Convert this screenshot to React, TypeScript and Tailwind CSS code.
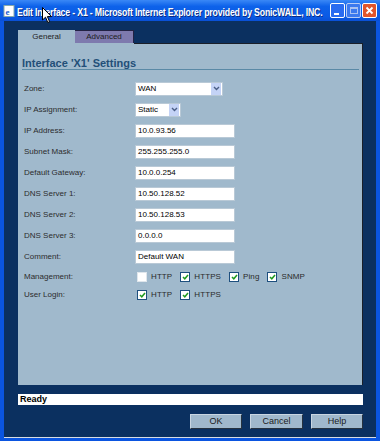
import React from "react";

const font = { fontFamily: '"Liberation Sans", Arial, sans-serif' };

const Field = ({ value, w }: { value: string; w: number }) => (
  <div
    className="flex h-[14px] items-center border border-[#b9c9d6] bg-white pl-[2px] text-[8px] text-black"
    style={{ width: w }}
  >
    {value}
  </div>
);

const Select = ({ value, w }: { value: string; w: number }) => (
  <div
    className="flex h-[14px] items-center border border-[#b9c9d6] bg-white text-[8px] text-black"
    style={{ width: w }}
  >
    <span className="flex-1 pl-[2px]">{value}</span>
    <span className="mr-[1px] flex h-[12px] w-[10px] items-center justify-center bg-[#c4d3f6]">
      <svg width="7" height="5" viewBox="0 0 7 5">
        <path d="M1 1 L3.5 3.5 L6 1" stroke="#4a5e86" strokeWidth="1.4" fill="none" />
      </svg>
    </span>
  </div>
);

const Check = ({ on, label }: { on: boolean; label: string }) => (
  <div className="flex items-center gap-[4px]">
    <span
      className={
        on
          ? "flex h-[10px] w-[10px] items-center justify-center border border-[#1d4f7e] bg-white"
          : "flex h-[10px] w-[10px] items-center justify-center border border-[#dfe6ec] bg-white"
      }
    >
      {on && (
        <svg width="7" height="6" viewBox="0 0 7 6">
          <path d="M1 3 L2.8 4.8 L6 1" stroke="#1f9a1f" strokeWidth="1.5" fill="none" />
        </svg>
      )}
    </span>
    <span className="text-[8px] tracking-[0.1px] text-[#2a2a2a]">{label}</span>
  </div>
);

const Row = ({ label, children }: { label: string; children: React.ReactNode }) => (
  <div className="flex h-[21px] items-center">
    <div className="w-[117px] pl-[6px] text-[8px] text-[#2c2c2c]">{label}</div>
    {children}
  </div>
);

const Btn = ({ label, w }: { label: string; w: number }) => (
  <div
    className="flex h-[15px] items-center justify-center border border-t-[#c9d6e2] border-l-[#c9d6e2] border-r-[#26323f] border-b-[#26323f] bg-[#a0b8cc] text-[9px] text-[#1b1b1b]"
    style={{ width: w }}
  >
    {label}
  </div>
);

export default function App() {
  return (
    <div className="relative flex h-[441px] w-[380px] flex-col overflow-hidden bg-[#0b55e0]" style={font}>
      {/* title bar */}
      <div className="flex h-[21px] items-center bg-[linear-gradient(#3a88f6,#0d62ea_30%,#0a5ae4_80%,#0a50d6)] pl-[3px] pr-[3px]">
        <svg width="12" height="12" viewBox="0 0 12 12" className="mr-[2px] shrink-0">
          <rect x="1" y="0.5" width="10" height="11" fill="#fff" stroke="#8aa" />
          <text x="2.5" y="10" fontSize="9" fontWeight="bold" fill="#1a5fd0" fontFamily="Liberation Serif">e</text>
        </svg>
        <div className="flex-1 overflow-hidden">
          <span className="inline-block origin-left scale-x-[0.875] whitespace-nowrap text-[10px] font-bold tracking-[-0.2px] text-white [text-shadow:1px_1px_0_#0a2a80]">
            Edit Interface - X1 - Microsoft Internet Explorer provided by SonicWALL, INC.
          </span>
        </div>
        <div className="flex shrink-0 gap-[1px]">
          <div className="flex h-[15px] w-[15px] items-end rounded-[2px] border border-white bg-[#2a6cf0] pb-[2px] pl-[3px]">
            <span className="h-[2px] w-[5px] bg-white" />
          </div>
          <div className="flex h-[15px] w-[15px] items-center justify-center rounded-[2px] border border-[#b9cdf5] bg-[#3b79ee]">
            <span className="h-[7px] w-[8px] border border-t-2 border-[#a9c2f2]" />
          </div>
          <div className="flex h-[15px] w-[15px] items-center justify-center rounded-[2px] border border-white bg-[#e0552c]">
            <svg width="9" height="9" viewBox="0 0 9 9">
              <path d="M1.5 1.5 L7.5 7.5 M7.5 1.5 L1.5 7.5" stroke="#fff" strokeWidth="1.8" />
            </svg>
          </div>
        </div>
      </div>

      {/* body */}
      <div className="mx-[4px] mb-[3px] flex flex-1 flex-col border-b border-[#d8dde3] bg-[#0b3060] pl-[14px] pr-[13px] pt-[9px]">
        <div className="flex h-[13px]">
          <div className="flex w-[57px] items-center justify-center bg-[#a0b9cc] text-[8px] text-[#222]">General</div>
          <div className="flex w-[59px] items-center justify-center border-r border-t border-[#222244] bg-[#7e7aae] text-[8px] text-[#1c1c1c]">
            Advanced
          </div>
        </div>
        <div className="h-[342px] border-r border-[#1a1f28] bg-[#a0b9cc]">
          <div className="flex h-[0px]">
            <div className="w-[116px]" />
            <div className="flex-1 border-t border-[#1a1f28]" />
          </div>
          <div className="ml-[4px] mr-[3px] border-b border-[#5a89a6] pt-[14px] text-[11px] font-bold leading-[12px] text-[#234f78]">
            Interface 'X1' Settings
          </div>
          <div className="mt-[8px] flex flex-col">
            <Row label="Zone:">
              <Select value="WAN" w={88} />
            </Row>
            <Row label="IP Assignment:">
              <Select value="Static" w={46} />
            </Row>
            <Row label="IP Address:">
              <Field value="10.0.93.56" w={100} />
            </Row>
            <Row label="Subnet Mask:">
              <Field value="255.255.255.0" w={100} />
            </Row>
            <Row label="Default Gateway:">
              <Field value="10.0.0.254" w={100} />
            </Row>
            <Row label="DNS Server 1:">
              <Field value="10.50.128.52" w={100} />
            </Row>
            <Row label="DNS Server 2:">
              <Field value="10.50.128.53" w={100} />
            </Row>
            <Row label="DNS Server 3:">
              <Field value="0.0.0.0" w={100} />
            </Row>
            <Row label="Comment:">
              <Field value="Default WAN" w={100} />
            </Row>
            <div className="flex h-[19px] items-center">
              <div className="w-[119px] pl-[6px] text-[8px] text-[#2c2c2c]">Management:</div>
              <div className="flex gap-[8px]">
                <Check on={false} label="HTTP" />
                <Check on label="HTTPS" />
                <Check on label="Ping" />
                <Check on label="SNMP" />
              </div>
            </div>
            <div className="flex h-[18px] items-center">
              <div className="w-[119px] pl-[6px] text-[8px] text-[#2c2c2c]">User Login:</div>
              <div className="flex gap-[8px]">
                <Check on label="HTTP" />
                <Check on label="HTTPS" />
              </div>
            </div>
          </div>
        </div>

        <div className="mt-[9px] flex h-[11px] items-center bg-white pl-[2px] text-[9px] font-semibold text-black">Ready</div>

        <div className="mt-[9px] flex justify-end gap-[8px]">
          <Btn label="OK" w={52} />
          <Btn label="Cancel" w={53} />
          <Btn label="Help" w={52} />
        </div>
      </div>

      {/* mouse pointer */}
      <svg className="absolute left-[42px] top-[7px]" width="11" height="17" viewBox="0 0 11 17">
        <path d="M0.5 0.5 L0.5 13 L3.5 10.2 L5.8 15.5 L7.6 14.7 L5.4 9.6 L9.5 9.6 Z" fill="#fff" stroke="#000" strokeWidth="1" />
      </svg>
    </div>
  );
}
